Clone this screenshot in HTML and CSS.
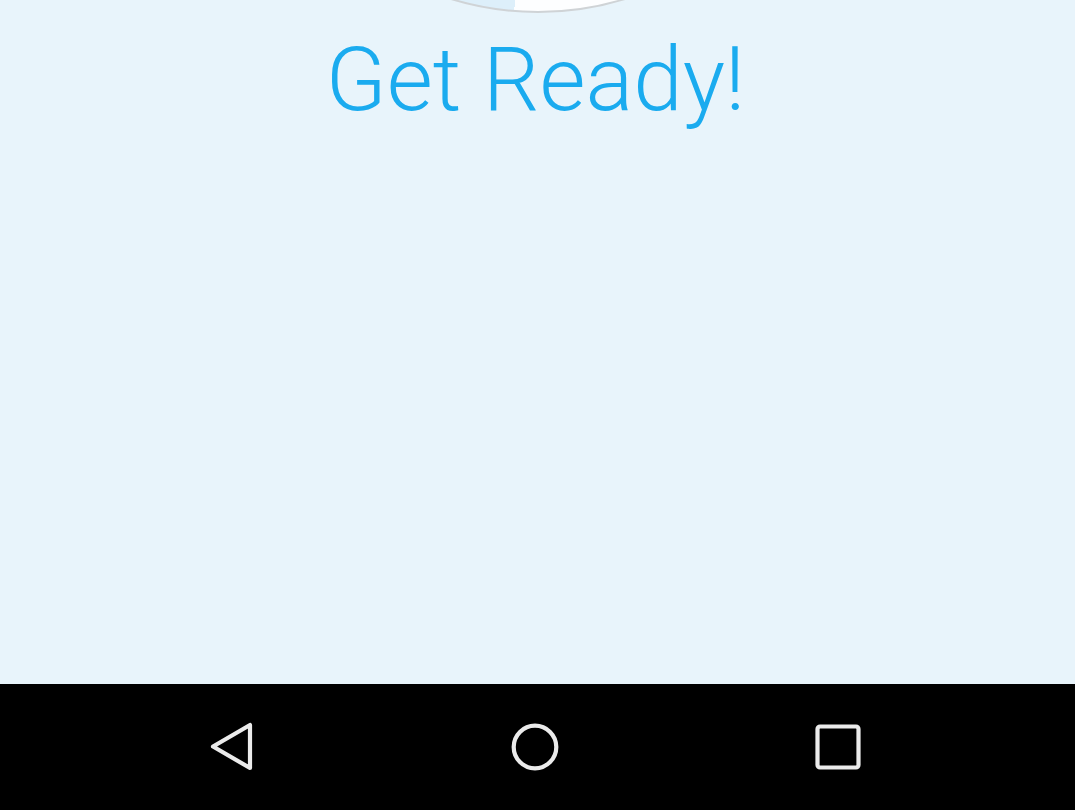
FILE: index.html
```html
<!DOCTYPE html>
<html>
<head>
<meta charset="utf-8">
<link rel="stylesheet" href="styles.css">
</head>
<body>
<div class="screen">
  <main class="content">
    <div class="dial"></div>
    <h1 class="title">Get Ready!</h1>
  </main>
  <nav class="navbar">
    <svg class="nav-icon" width="60" height="60" viewBox="0 0 60 60">
      <path d="M48 8 L48 51 L11 29.5 Z" fill="none" stroke="#ebebeb" stroke-width="4.2" stroke-linejoin="round"/>
    </svg>
    <svg class="nav-icon" width="60" height="60" viewBox="0 0 60 60">
      <circle cx="30" cy="30" r="21.3" fill="none" stroke="#ebebeb" stroke-width="4.2"/>
    </svg>
    <svg class="nav-icon" width="60" height="60" viewBox="0 0 60 60">
      <rect x="9.5" y="9.5" width="41" height="41" rx="2.5" fill="none" stroke="#ebebeb" stroke-width="4.2"/>
    </svg>
  </nav>
</div>
</body>
</html>
```
FILE: styles.css
```css
html, body {
  margin: 0;
  padding: 0;
}
body {
  background: #e8f4fb;
  font-family: Roboto, "Liberation Sans", sans-serif;
}
.screen {
  width: 1075px;
  height: 810px;
  display: flex;
  flex-direction: column;
  overflow: hidden;
}
.content {
  height: 684px;
  background: #e8f4fb;
  display: flex;
  flex-direction: column;
  align-items: center;
  overflow: hidden;
}
.dial {
  flex: none;
  width: 596px;
  height: 596px;
  margin-top: -583px;
  box-sizing: border-box;
  border-radius: 50%;
  border: 2px solid #cfd3d6;
  background: conic-gradient(#fdfeff 0deg 184.6deg, #ddeffa 184.6deg 360deg);
}
.title {
  margin: 23px 0 0 -4px;
  font-size: 89px;
  font-weight: 300;
  line-height: 88px;
  color: #1aabef;
}
.navbar {
  height: 126px;
  box-sizing: border-box;
  padding-right: 5px;
  background: #000;
  display: flex;
  justify-content: center;
  align-items: center;
  gap: 243px;
}
.nav-icon {
  display: block;
}
```
